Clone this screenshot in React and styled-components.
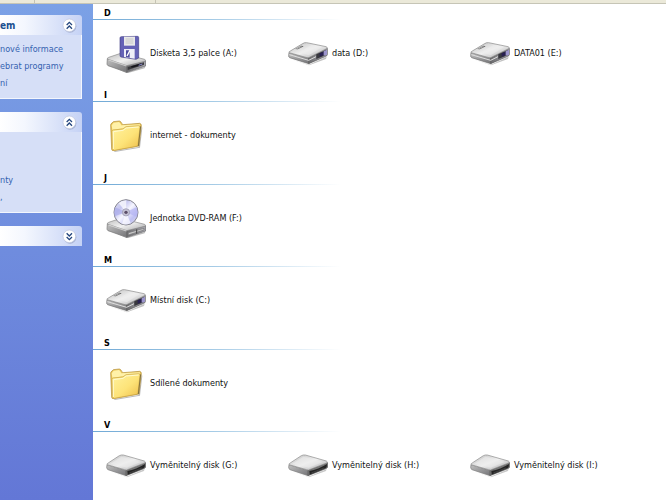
import styled, { createGlobalStyle } from "styled-components"

const groups = [
	{
		letter: "D",
		items: [
			{ name: "Disketa 3,5 palce (A:)", icon: "floppy" },
			{ name: "data (D:)", icon: "disk" },
			{ name: "DATA01 (E:)", icon: "disk" },
		],
	},
	{ letter: "I", items: [{ name: "internet - dokumenty", icon: "folder" }] },
	{ letter: "J", items: [{ name: "Jednotka DVD-RAM (F:)", icon: "dvd" }] },
	{ letter: "M", items: [{ name: "Místní disk (C:)", icon: "disk" }] },
	{ letter: "S", items: [{ name: "Sdílené dokumenty", icon: "folder" }] },
	{
		letter: "V",
		items: [
			{ name: "Vyměnitelný disk (G:)", icon: "removable" },
			{ name: "Vyměnitelný disk (H:)", icon: "removable" },
			{ name: "Vyměnitelný disk (I:)", icon: "removable" },
		],
	},
]

function Gradients() {
	return (
		<HiddenSvg width="0" height="0" aria-hidden="true">
			<defs>
				<linearGradient id="top" x1="0" y1="0" x2="1" y2="1">
					<stop offset="0" stopColor="#bcbcbc" />
					<stop offset="0.5" stopColor="#f0f0f0" />
					<stop offset="1" stopColor="#a8a8aa" />
				</linearGradient>
				<linearGradient id="left" x1="0" y1="0" x2="1" y2="1">
					<stop offset="0" stopColor="#c0c0c0" />
					<stop offset="1" stopColor="#747477" />
				</linearGradient>
				<linearGradient id="right" x1="0" y1="0" x2="1" y2="0">
					<stop offset="0" stopColor="#6c6c6e" />
					<stop offset="1" stopColor="#a8a8b0" />
				</linearGradient>
				<linearGradient id="folderFront" x1="0" y1="0" x2="1" y2="1">
					<stop offset="0" stopColor="#fff3a0" />
					<stop offset="0.55" stopColor="#fde378" />
					<stop offset="1" stopColor="#edbd48" />
				</linearGradient>
				<linearGradient id="disc" x1="0" y1="0" x2="1" y2="1">
					<stop offset="0" stopColor="#e4e4ee" />
					<stop offset="0.3" stopColor="#c4c5f0" />
					<stop offset="0.5" stopColor="#f6f6ff" />
					<stop offset="0.75" stopColor="#bfc0f3" />
					<stop offset="1" stopColor="#e0e0ea" />
				</linearGradient>
			</defs>
		</HiddenSvg>
	)
}

function DriveBase() {
	return (
		<>
			<path d="M8 96 L62 118 L118 101 L116 106 L63 121 Z" fill="#bbb" />
			<path d="M4 78 L62 97 V118 L6 98 Q3 96 3 92 Z" fill="url(#left)" stroke="#777" strokeWidth="2" />
			<path d="M62 97 L119 83 V99 L62 118 Z" fill="url(#right)" stroke="#606064" strokeWidth="2" />
			<path d="M4 78 Q3 75 8 73 L44 61 L116 79 Q121 82 116 85 L62 98 Z" fill="url(#top)" stroke="#8a8a8a" strokeWidth="2" />
			<path d="M8 81 L61 99" stroke="#eee" strokeWidth="2" />
		</>
	)
}

function FloppyIcon() {
	return (
		<Icon viewBox="0 0 120 120">
			<DriveBase />
			<path d="M65 102 L114 88 V95 L65 111 Z" fill="#39393d" />
			<path d="M76 102 L105 94" stroke="#15151b" strokeWidth="5" />
			<path d="M98 97 L109 93" stroke="#8d8bd0" strokeWidth="3" />
			<path d="M42 15 Q42 11 46 11 L94 10 Q98 10 98 14 V75 L90 79 L45 72 Q42 71 42 68 Z" fill="#6562b6" stroke="#444087" strokeWidth="2" />
			<path d="M54 11 H87 V38 H54 Z" fill="#e9e9e9" />
			<path d="M59 18 H82 M59 24 H82 M59 30 H82" stroke="#b9b9b9" strokeWidth="2" />
			<path d="M54 48 H86 V77 L54 72 Z" fill="#eeeef8" />
			<path d="M60 52 H71 V74 L60 72 Z" fill="#4e4b9e" />
			<path d="M63 69 L72 52" stroke="#fff" strokeWidth="4" />
		</Icon>
	)
}

function DiskIcon() {
	return (
		<Icon viewBox="0 0 120 120">
			<path d="M8 78 L62 95 L116 71 L114 78 L63 97 Z" fill="#c2c2c2" />
			<path d="M3 59 L62 74 V92 L5 74 Q2 73 2 68 Z" fill="url(#left)" stroke="#6f6f6f" strokeWidth="2" />
			<path d="M62 74 L118 46 V65 Q118 68 113 70 L62 92 Z" fill="url(#right)" stroke="#555" strokeWidth="2" />
			<path d="M3 59 Q2 56 7 54 L42 33 Q49 28 56 29 L114 41 Q120 43 116 47 L66 72 Q62 75 57 74 Z" fill="url(#top)" stroke="#858585" strokeWidth="2" />
			<path d="M35 57 L72 35 L102 42 L62 67 Z" fill="#ededed" opacity="0.6" />
			<path d="M22 48 L40 38 L47 40 L29 49 Z" fill="#555" />
			<path d="M25 48 L41 40" stroke="#ddd" strokeWidth="2" />
			<path d="M4 65 L62 82 L84 71" fill="none" stroke="#dedede" strokeWidth="3" />
			<path d="M85 64 L114 51 V66 L85 78 Z" fill="#38383e" />
			<path d="M95 61 L107 56 V66 L95 71 Z" fill="#282052" />
			<path d="M107 55 L117 50 V65 L107 68 Z" fill="#9b94cc" />
		</Icon>
	)
}

function RemovableIcon() {
	return (
		<Icon viewBox="0 0 120 120">
			<path d="M8 77 L61 95 L116 72 L114 78 L63 97 Z" fill="#c8c8c8" />
			<path d="M3 59 L60 76 V92 L6 74 Q2 72 2 67 Z" fill="url(#left)" stroke="#808080" strokeWidth="2" />
			<path d="M60 76 L119 53 V66 Q118 69 113 71 L60 92 Z" fill="#777" stroke="#555" strokeWidth="2" />
			<path d="M3 59 Q2 56 8 53 L40 32 Q46 29 52 30 L115 48 Q121 51 116 54 L67 73 Q61 77 56 74 Z" fill="url(#top)" stroke="#888" strokeWidth="2" />
			<path d="M14 56 L46 35 L104 51 L62 68 Z" fill="#ececec" opacity="0.6" />
			<path d="M64 78 Q91 73 117 57 Q118 66 112 70 L65 89 Z" fill="#242424" />
			<path d="M70 84 L108 69" stroke="#505050" strokeWidth="2" />
		</Icon>
	)
}

function DvdIcon() {
	return (
		<Icon viewBox="0 0 120 120">
			<DriveBase />
			<path d="M67 104 L114 91 V96 L67 111 Z" fill="#c8c8c8" stroke="#727276" strokeWidth="2" />
			<path d="M92 94 V107" stroke="#444" strokeWidth="3" />
			<ellipse cx="60" cy="43" rx="36" ry="38" fill="url(#disc)" stroke="#85858f" strokeWidth="3" />
			<path d="M60 43 L38 15 Q49 7 61 7 Z" fill="#fff" opacity="0.7" />
			<path d="M60 43 L28 28 Q22 39 26 55 Z" fill="#a9abea" opacity="0.7" />
			<path d="M60 43 L92 27 Q98 42 93 57 Z" fill="#b3b3f2" opacity="0.7" />
			<path d="M60 43 L48 77 Q60 83 74 75 Z" fill="#fff" opacity="0.7" />
			<circle cx="60" cy="43" r="11" fill="#c5c3d5" stroke="#9291a9" strokeWidth="2" />
			<circle cx="60" cy="43" r="5" fill="#5b4d68" />
		</Icon>
	)
}

function FolderIcon() {
	return (
		<Icon viewBox="0 0 120 120">
			<path d="M24 108 L98 96 L107 35 L109 38 L102 98 L26 111 Z" fill="#bbb" />
			<path d="M14 30 Q14 26 18 24 L22 20 L40 18 Q44 18 47 25 L51 29 L101 25 Q106 26 106 31 L99 93 L21 107 Q18 107 17 103 Z" fill="#eac65a" stroke="#b18c36" strokeWidth="2" />
			<path d="M17 31 L23 23 L39 21 Q42 22 46 31 L102 28 L101 34 L19 44 Z" fill="#fff1a8" />
			<path d="M18 49 Q18 46 22 45 L50 42 L60 35 L98 32 Q103 32 102 37 L96 90 Q95 93 91 94 L25 106 Q21 106 20 101 Z" fill="url(#folderFront)" stroke="#caa443" strokeWidth="2" />
			<path d="M22 102 V50 L51 46 L61 39 L98 36" fill="none" stroke="#fffad0" strokeWidth="3" />
			<path d="M104 34 L97 93" stroke="#83733f" strokeWidth="3" />
		</Icon>
	)
}

const icons = {
	floppy: FloppyIcon,
	disk: DiskIcon,
	removable: RemovableIcon,
	dvd: DvdIcon,
	folder: FolderIcon,
}

function Toggle({ open, label }) {
	return (
		<ToggleButton aria-label={label} aria-expanded={open}>
			<svg width="15" height="15" viewBox="0 0 45 45" aria-hidden="true">
				<circle cx="24" cy="25" r="19" fill="#8c98bd" opacity="0.6" />
				<circle cx="22" cy="22" r="19" fill="#fff" stroke="#bcc4dc" strokeWidth="2" />
				<path
					d={open ? "M14 21 L22 13 L30 21 M14 32 L22 24 L30 32" : "M14 13 L22 21 L30 13 M14 24 L22 32 L30 24"}
					fill="none"
					stroke="#24467e"
					strokeWidth="4"
				/>
			</svg>
		</ToggleButton>
	)
}

function App() {
	return (
		<Page>
			<GlobalStyle />
			<Gradients />
			<Toolbar>
				<Band $width="35px" />
				<Band $width="121px" />
			</Toolbar>
			<Content>
				<Sidebar>
					<Panel>
						<PanelHeader>
							<PanelTitle>em</PanelTitle>
							<Toggle open label="Sbalit" />
						</PanelHeader>
						<PanelBody $lines={3}>
							<PanelLink href="#">nové informace</PanelLink>
							<PanelLink href="#">ebrat programy</PanelLink>
							<PanelLink href="#">ní</PanelLink>
						</PanelBody>
					</Panel>
					<Panel>
						<PanelHeader>
							<PanelTitle />
							<Toggle open label="Sbalit" />
						</PanelHeader>
						<PanelBody $lines={4}>
							<PanelLink href="#">nty</PanelLink>
							<PanelLink href="#">,</PanelLink>
						</PanelBody>
					</Panel>
					<Panel>
						<PanelHeader>
							<PanelTitle />
							<Toggle open={false} label="Rozbalit" />
						</PanelHeader>
					</Panel>
				</Sidebar>
				<Main>
					{groups.map((group) => (
						<Group key={group.letter}>
							<GroupTitle>{group.letter}</GroupTitle>
							<Items>
								{group.items.map((item) => {
									const ItemIcon = icons[item.icon]
									return (
										<Item key={item.name}>
											<ItemIcon />
											<span>{item.name}</span>
										</Item>
									)
								})}
							</Items>
						</Group>
					))}
				</Main>
			</Content>
		</Page>
	)
}

const GlobalStyle = createGlobalStyle`
	* {
		box-sizing: border-box;
	}

	body {
		margin: 0;
		overflow: hidden;
		background: #fff;
		font-family: Tahoma, "DejaVu Sans Condensed", sans-serif;
		font-size: 9px;
		line-height: 17px;
		color: #111;
	}
`

const Page = styled.div`
	display: flex;
	flex-direction: column;
	height: 100vh;
`

const HiddenSvg = styled.svg`
	display: block;
	flex: none;
`

const Toolbar = styled.div`
	display: flex;
	flex: none;
	height: 4px;
	background: #ebe9d9;
	border-bottom: 1px solid #c6c5b6;
`

const Band = styled.div`
	width: ${(props) => props.$width};
	border-right: 1px solid #c5c3b4;
`

const Content = styled.div`
	display: flex;
	flex: 1;
	min-height: 0;
`

const Sidebar = styled.aside`
	display: flex;
	flex-direction: column;
	flex: none;
	gap: 13px;
	width: 93px;
	padding: 11px 11px 0 0;
	background: linear-gradient(#7ba1e6, #6377d6);
`

const Panel = styled.section`
	border-radius: 0 3px 0 0;
`

const PanelHeader = styled.div`
	display: flex;
	align-items: center;
	justify-content: space-between;
	height: 20px;
	padding-right: 5px;
	border-radius: 0 3px 0 0;
	background: linear-gradient(to right, #fff, #f4f7fe 30%, #c5d2f5);
`

const PanelTitle = styled.h2`
	margin: 0;
	font-size: 10px;
	color: #20508f;
`

const ToggleButton = styled.button`
	display: flex;
	padding: 0;
	border: 0;
	background: none;
`

const PanelBody = styled.div`
	display: flex;
	flex-direction: column;
	justify-content: flex-end;
	align-items: flex-start;
	height: ${(props) => props.$lines * 17 + 13}px;
	padding-bottom: 6px;
	background: #d6dff7;
	border: solid #f3f6fd;
	border-width: 0 1px 1px 0;
`

const PanelLink = styled.a`
	white-space: nowrap;
	text-decoration: none;
	color: #3562b0;
`

const Main = styled.main`
	flex: 1;
	min-width: 0;
	background: #fff;
`

const Group = styled.section`
	padding-bottom: 2px;

	&:nth-child(even) {
		padding-bottom: 3px;
	}
`

const GroupTitle = styled.h3`
	height: 16px;
	margin: 0;
	padding-left: 11px;
	font-size: 9px;
	line-height: 19px;
	color: #000;
	background: linear-gradient(to right, #70a9d6, #a5cbe6 120px, #fff 248px) bottom / 100% 1px no-repeat;
`

const Items = styled.div`
	display: grid;
	grid-template-columns: repeat(auto-fill, 182px);
	padding-left: 13px;
`

const Item = styled.div`
	display: flex;
	align-items: center;
	gap: 4px;
	height: 64px;
	padding-top: 2px;
	white-space: nowrap;
`

const Icon = styled.svg`
	flex: none;
	width: 40px;
	height: 40px;
`

export default App
